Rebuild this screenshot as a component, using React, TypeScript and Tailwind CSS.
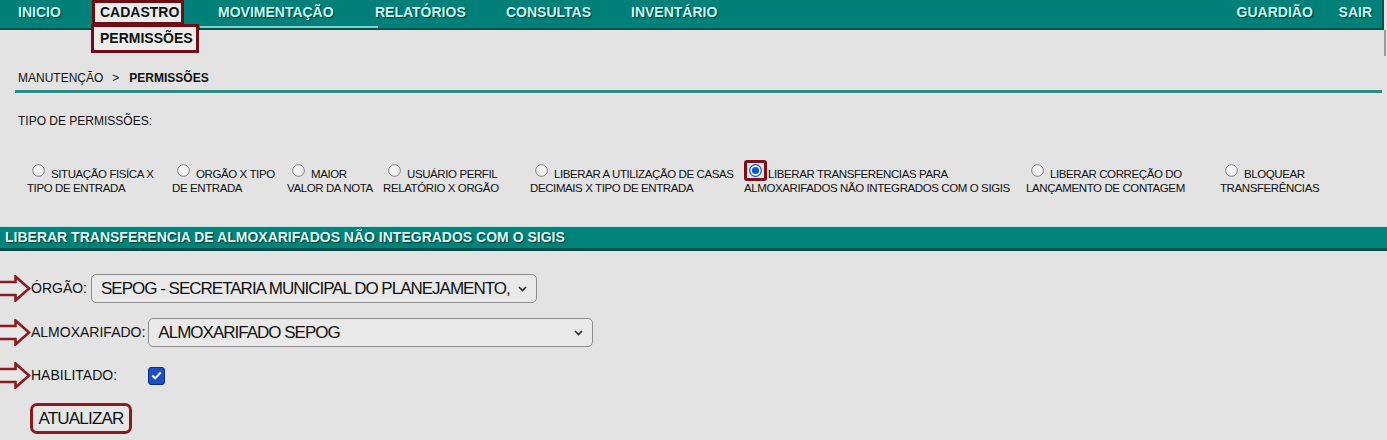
import React from "react";

const items = [
  { w: "w-[145px]", a: "SITUAÇÃO FISÍCA X", b: "TIPO DE ENTRADA" },
  { w: "w-[115px]", a: "ORGÃO X TIPO", b: "DE ENTRADA" },
  { w: "w-[96px]", a: "MAIOR", b: "VALOR DA NOTA" },
  { w: "w-[147px]", a: "USUÁRIO PERFIL", b: "RELATÓRIO X ORGÃO" },
  { w: "w-[214px]", a: "LIBERAR A UTILIZAÇÃO DE CASAS", b: "DECIMAIS X TIPO DE ENTRADA" },
  { w: "w-[282px]", a: "LIBERAR TRANSFERENCIAS PARA", b: "ALMOXARIFADOS NÃO INTEGRADOS COM O SIGIS", checked: true },
  { w: "w-[194px]", a: "LIBERAR CORREÇÃO DO", b: "LANÇAMENTO DE CONTAGEM" },
  { w: "w-[160px]", a: "BLOQUEAR", b: "TRANSFERÊNCIAS" },
];

function Radio({ checked }: { checked?: boolean }) {
  return (
    <span className="relative ml-[5px] mr-[6px] -mt-[3px] block h-[13px] w-[13px] shrink-0">
      {checked ? (
        <>
          <svg width="13" height="13" viewBox="0 0 13 13" className="block">
            <circle cx="6.5" cy="6.5" r="5.8" fill="#fff" stroke="#0b57d0" strokeWidth="1.2" />
            <circle cx="6.5" cy="6.5" r="3.6" fill="#0b57d0" />
          </svg>
          <span className="absolute -left-[5px] -top-[4px] h-[21px] w-[23px] rounded-[3px] border-[3px] border-[#7d0e16]" />
        </>
      ) : (
        <svg width="13" height="13" viewBox="0 0 13 13" className="block">
          <circle cx="6.5" cy="6.5" r="5.8" fill="#f3f3f3" stroke="#7a7a7a" strokeWidth="1" />
        </svg>
      )}
    </span>
  );
}

function Arrow() {
  return (
    <svg width="31" height="27" viewBox="0 0 31 27" className="block shrink-0">
      <path
        d="M-3 7 H15.5 V1.5 L29 13.5 L15.5 25.5 V20 H-3"
        fill="#e8e8e8"
        stroke="#8a1b20"
        strokeWidth="2.6"
        strokeLinejoin="miter"
      />
    </svg>
  );
}

function Chevron() {
  return (
    <svg width="9" height="6" viewBox="0 0 9 6" className="ml-auto block shrink-0">
      <path d="M1 1 L4.5 4.6 L8 1" fill="none" stroke="#222" strokeWidth="1.5" />
    </svg>
  );
}

function Select({ w, text }: { w: string; text: string }) {
  return (
    <div
      className={`${w} flex h-[29px] items-center overflow-hidden whitespace-nowrap rounded-[5px] border border-[#8d8d8d] bg-[#e9e9e9] pl-[9px] pr-[9px] text-[17px] tracking-[-1px] text-[#111]`}
    >
      <span>{text}</span>
      <Chevron />
    </div>
  );
}

export default function App() {
  const navText =
    "text-[14px] font-bold text-[#c4f7f1] [text-shadow:1px_1px_1px_#0a3532] whitespace-nowrap";
  return (
    <div className="relative h-[440px] w-[1387px] overflow-hidden bg-[#e3e3e3] font-['Liberation_Sans',Arial,sans-serif] text-[#111]">
      {/* top nav */}
      <nav className="relative z-10 h-[30px] w-[1384px] border-b-[2px] border-r-[2px] border-[#05524d] bg-[#01807a]">
        <div className="flex h-[25px] items-center">
          <div className={`w-[92px] pl-[18px] ${navText}`}>INICIO</div>
          <div className="relative h-[25px] w-[92px] self-start">
            <div className="flex h-[25px] items-center border-[3px] border-[#6e0d14] bg-[#ececec] pl-[5px] text-[14px] font-bold text-[#111]">
              CADASTRO
            </div>
            <div className="absolute left-[-1px] top-[24px] flex h-[29px] w-[108px] items-center border-[3px] border-[#6e0d14] bg-[#ececec] pl-[6px] text-[14px] font-bold text-[#111]">
              PERMISSÕES
            </div>
          </div>
          <div className={`ml-[34px] w-[157px] ${navText}`}>MOVIMENTAÇÃO</div>
          <div className={`w-[131px] ${navText}`}>RELATÓRIOS</div>
          <div className={`w-[125px] ${navText}`}>CONSULTAS</div>
          <div className={navText}>INVENTÁRIO</div>
          <div className={`ml-auto w-[102px] ${navText}`}>GUARDIÃO</div>
          <div className={`pr-[10px] ${navText}`}>SAIR</div>
        </div>
        <span className="absolute left-[200px] top-[26px] h-[2px] w-[178px] bg-[#7fd3cc]" />
      </nav>
      <span className="absolute left-[1384px] top-[30px] h-[26px] w-[2px] bg-[#9b9b9b]" />

      {/* breadcrumb */}
      <div className="ml-[15px] mt-[41px] w-[1367px] border-b-[3px] border-[#2c8a85] pb-[5px] pl-[3px] text-[12px] leading-[14px]">
        MANUTENÇÃO<span className="ml-[9px] mr-[10px]">&gt;</span>
        <span className="font-bold">PERMISSÕES</span>
      </div>

      <div className="ml-[18px] mt-[21px] text-[12px] leading-[14px]">TIPO DE PERMISSÕES:</div>

      {/* radio options */}
      <div className="mt-[39px] flex pl-[27px] text-[11.5px] leading-[14px] tracking-[-0.4px] text-[#111]">
        {items.map((it) => (
          <div key={it.a} className={`${it.w} shrink-0 whitespace-nowrap`}>
            <div className="flex h-[14px] items-start">
              <Radio checked={it.checked} />
              <span>{it.a}</span>
            </div>
            <div>{it.b}</div>
          </div>
        ))}
      </div>

      {/* section bar */}
      <div className="mt-[31px] flex h-[25px] items-center border-b-[3px] border-t border-b-[#04504b] border-t-[#bfe1dd] bg-[#00837b] pl-[5px] text-[14px] font-bold text-[#dff8f5] [text-shadow:1px_1px_1px_#0a3532]">
        LIBERAR TRANSFERENCIA DE ALMOXARIFADOS NÃO INTEGRADOS COM O SIGIS
      </div>

      {/* form */}
      <div className="mt-[23px] flex flex-col">
        <div className="flex h-[29px] items-center">
          <Arrow />
          <span className="text-[14px]">ÓRGÃO:</span>
          <div className="ml-[4px]">
            <Select w="w-[446px]" text="SEPOG - SECRETARIA MUNICIPAL DO PLANEJAMENTO," />
          </div>
        </div>
        <div className="mt-[15px] flex h-[29px] items-center">
          <Arrow />
          <span className="text-[14px]">ALMOXARIFADO:</span>
          <div className="ml-[3px]">
            <Select w="w-[445px]" text="ALMOXARIFADO SEPOG" />
          </div>
        </div>
        <div className="mt-[14px] flex h-[29px] items-center">
          <Arrow />
          <span className="text-[14px]">HABILITADO:</span>
          <span className="ml-[31px] flex h-[18px] w-[17px] items-center justify-center rounded-[3px] border border-[#0b2f86] bg-[#1c4fc4]">
            <svg width="11" height="9" viewBox="0 0 11 9">
              <path d="M1.2 4.6 L4.2 7.4 L9.8 1.4" fill="none" stroke="#fff" strokeWidth="2" />
            </svg>
          </span>
        </div>
        <div className="mt-[13px] pl-[30px]">
          <button className="flex h-[31px] w-[102px] items-center justify-center rounded-[7px] border-[3px] border-[#8b1a1f] bg-[#e6e6e6] text-[17px] tracking-[-0.8px] text-[#111]">
            ATUALIZAR
          </button>
        </div>
      </div>
    </div>
  );
}
